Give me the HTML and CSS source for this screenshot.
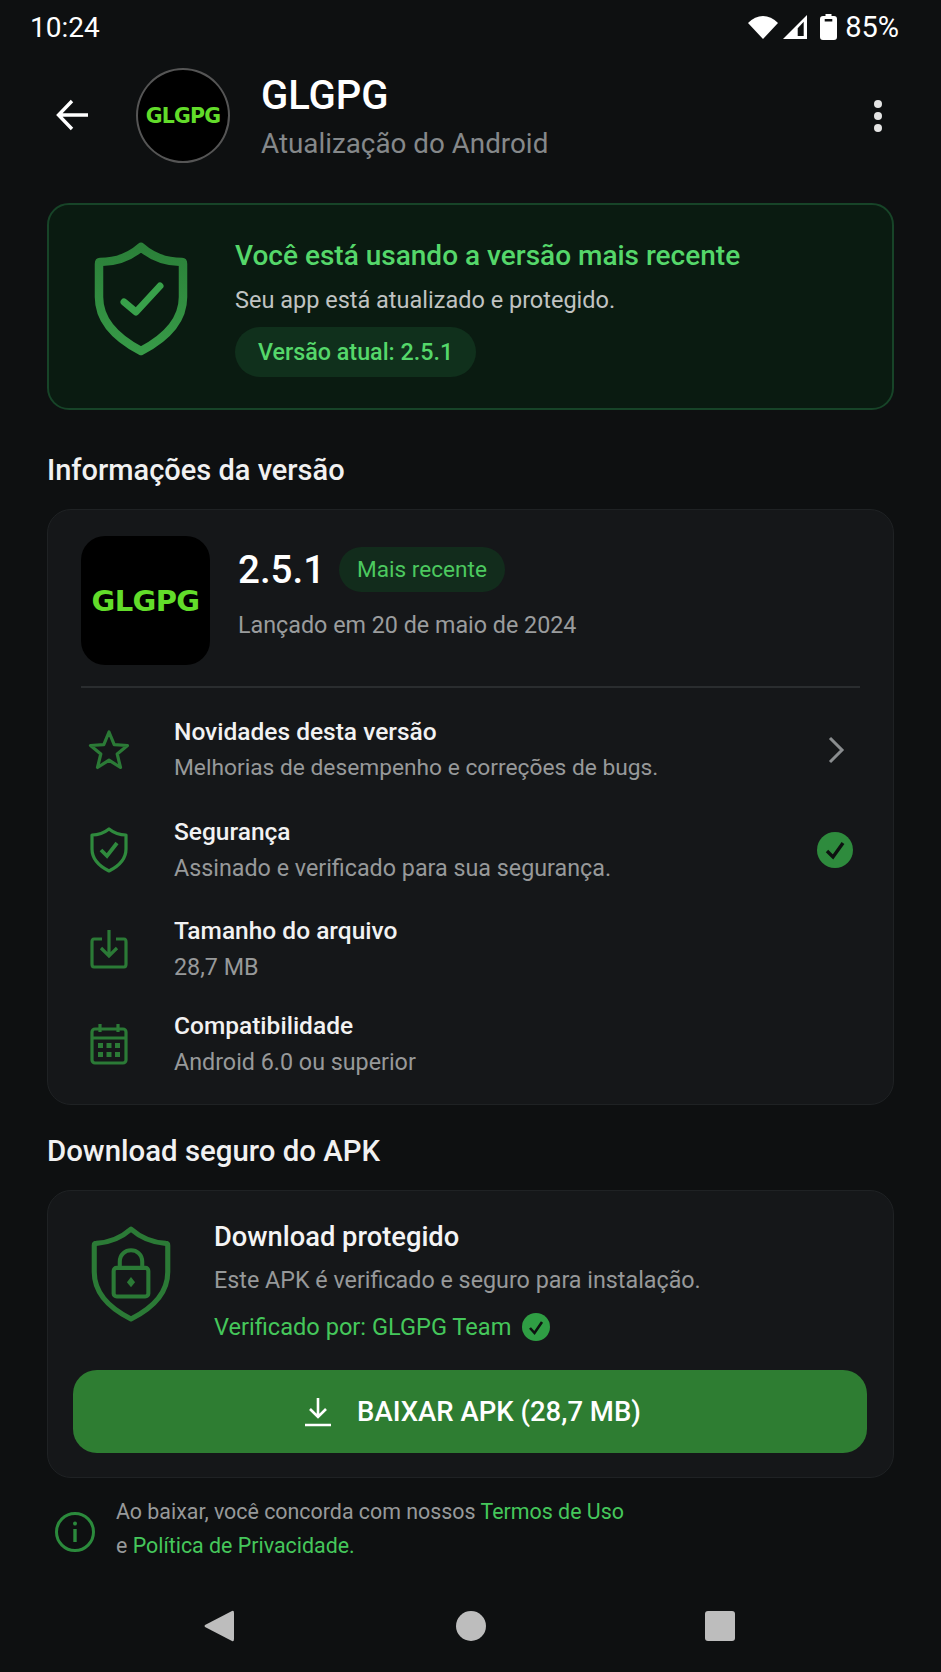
FILE: index.html
```html
<!DOCTYPE html>
<html lang="pt-BR">
<head>
<meta charset="utf-8">
<title>GLGPG</title>
<link rel="stylesheet" href="styles.css">
</head>
<body>
<div class="screen">
  <div class="status">
    <span class="time">10:24</span>
    <div class="status-right">
      <svg class="ic-wifi" width="30" height="23" viewBox="0 0 30 23"><path d="M15 23 0 7Q7 0 15 0T30 7Z" fill="#fff"/></svg>
      <svg class="ic-signal" width="24" height="24" viewBox="0 0 24 24"><path d="M24 0V24H0ZM14.700 13.300 20.700 6.700V21H14.700Z" fill="#fff" fill-rule="evenodd"/></svg>
      <svg class="ic-batt" width="17" height="26" viewBox="0 0 17 26"><path d="M5.500 0H11.500V2H14Q17 2 17 5V23Q17 26 14 26H3Q0 26 0 23V5Q0 2 3 2H5.500ZM4.700 5V7.500H12.300V5Z" fill="#fff" fill-rule="evenodd"/></svg>
      <span class="batt-text">85%</span>
    </div>
  </div>

  <header class="header">
    <svg class="back" width="34" height="32" viewBox="0 0 34 32"><path d="M32 16H3M16 2 2.500 16 16 30" fill="none" stroke="#fff" stroke-width="3.400"/></svg>
    <div class="avatar"><span>GLGPG</span></div>
    <div class="header-text">
      <div class="app-name">GLGPG</div>
      <div class="app-sub">Atualização do Android</div>
    </div>
    <div class="dots"><i></i><i></i><i></i></div>
  </header>

  <section class="hero">
    <svg class="hero-shield" width="94" height="114" viewBox="0 0 94 114">
      <defs><linearGradient id="g1" x1="0" y1="0" x2="0" y2="1"><stop offset="0" stop-color="#2b8039"/><stop offset="1" stop-color="#379a47"/></linearGradient></defs>
      <path d="M47 5C57 14 71 20 88 20Q89 20 89 22V55C89 80 70 97 47 109C24 97 5 80 5 55V22Q5 20 6 20C23 20 37 14 47 5Z" fill="none" stroke="url(#g1)" stroke-width="8.500" stroke-linejoin="round"/>
      <path d="M30 60 42 70 66 44" fill="none" stroke="#38a14a" stroke-width="7" stroke-linecap="round" stroke-linejoin="round"/>
    </svg>
    <div class="hero-text">
      <div class="hero-title">Você está usando a versão mais recente</div>
      <div class="hero-sub">Seu app está atualizado e protegido.</div>
      <div class="hero-pill">Versão atual: 2.5.1</div>
    </div>
  </section>

  <h2 class="section-title first">Informações da versão</h2>

  <section class="card info-card">
    <div class="ver-top">
      <div class="logo"><span>GLGPG</span></div>
      <div class="ver-text">
        <div class="ver-line"><span class="ver-num">2.5.1</span><span class="ver-badge">Mais recente</span></div>
        <div class="ver-date">Lançado em 20 de maio de 2024</div>
      </div>
    </div>
    <div class="divider"></div>
    <div class="rows">
      <div class="row row-a">
        <svg class="row-ic" width="42" height="42" viewBox="0 0 42 42"><path d="M21 3 26.200 15.600 39.500 16.500 29.200 25 32.500 38.500 21 31.200 9.500 38.500 12.800 25 2.500 16.500 15.800 15.600Z" fill="none" stroke="#2b7a36" stroke-width="3.200" stroke-linejoin="round"/></svg>
        <div class="row-text"><div class="row-title">Novidades desta versão</div><div class="row-sub">Melhorias de desempenho e correções de bugs.</div></div>
        <svg class="chev" width="20" height="28" viewBox="0 0 20 28"><path d="M4 2 16 14 4 26" fill="none" stroke="#8a8d8f" stroke-width="3"/></svg>
      </div>
      <div class="row row-b">
        <svg class="row-ic" width="42" height="46" viewBox="0 0 42 46"><path d="M21 2C26 6 32 8 38 8V22C38 32 31 39 21 44C11 39 4 32 4 22V8C10 8 16 6 21 2Z" fill="none" stroke="#2f8a3d" stroke-width="3.200" stroke-linejoin="round"/><path d="M13 23 19 29 29 16" fill="none" stroke="#2f8a3d" stroke-width="3.800"/></svg>
        <div class="row-text"><div class="row-title">Segurança</div><div class="row-sub">Assinado e verificado para sua segurança.</div></div>
        <svg class="tick" width="36" height="36" viewBox="0 0 36 36"><circle cx="18" cy="18" r="18" fill="#2e8b3d"/><path d="M10 19 16 25 26 11" fill="none" stroke="#0d1210" stroke-width="3.400"/></svg>
      </div>
      <div class="row row-c">
        <svg class="row-ic" width="42" height="40" viewBox="0 0 42 40"><path d="M14 10H6Q4 10 4 13V35Q4 38 6 38H36Q38 38 38 35V13Q38 10 36 10H28" fill="none" stroke="#2b7a36" stroke-width="3.200"/><path d="M21 1V27M13 19 21 27 29 19" fill="none" stroke="#2b7a36" stroke-width="3.200"/></svg>
        <div class="row-text"><div class="row-title">Tamanho do arquivo</div><div class="row-sub">28,7 MB</div></div>
      </div>
      <div class="row row-d">
        <svg class="row-ic" width="42" height="42" viewBox="0 0 42 42"><rect x="4" y="6" width="34" height="34" rx="3" fill="none" stroke="#2b7a36" stroke-width="3.200"/><path d="M4 15H38M12 1V9M30 1V9" fill="none" stroke="#2b7a36" stroke-width="3.200"/><g fill="#2b7a36"><rect x="10" y="20" width="5" height="5"/><rect x="18.500" y="20" width="5" height="5"/><rect x="27" y="20" width="5" height="5"/><rect x="10" y="29" width="5" height="5"/><rect x="18.500" y="29" width="5" height="5"/><rect x="27" y="29" width="5" height="5"/></g></svg>
        <div class="row-text"><div class="row-title">Compatibilidade</div><div class="row-sub">Android 6.0 ou superior</div></div>
      </div>
    </div>
  </section>

  <h2 class="section-title second">Download seguro do APK</h2>

  <section class="card dl-card">
    <div class="dl-top">
      <svg class="dl-shield" width="82" height="98" viewBox="0 0 80 96">
        <path d="M40 4C49 12 60 17 74 18Q76 18 76 20V46C76 68 60 82 40 92C20 82 4 68 4 46V20Q4 18 6 18C20 17 31 12 40 4Z" fill="none" stroke="#2b7a36" stroke-width="5" stroke-linejoin="round"/>
        <path d="M29 42V36C29 21 51 21 51 36V42" fill="none" stroke="#2b7a36" stroke-width="4"/>
        <rect x="23" y="42" width="34" height="28" rx="3" fill="none" stroke="#2b7a36" stroke-width="4"/>
        <path d="M40 51 44 56 40 61 36 56Z" fill="#2b7a36"/>
      </svg>
      <div class="dl-text">
        <div class="dl-title">Download protegido</div>
        <div class="dl-sub">Este APK é verificado e seguro para instalação.</div>
        <div class="dl-ver"><span>Verificado por: GLGPG Team</span><svg width="28" height="28" viewBox="0 0 28 28"><circle cx="14" cy="14" r="14" fill="#2f9e44"/><path d="M8 15 12.500 20 20 9" fill="none" stroke="#0d1210" stroke-width="2.600"/></svg></div>
      </div>
    </div>
    <button class="dl-btn">
      <svg width="26" height="30" viewBox="0 0 26 30"><path d="M13 1V20M5 12 13 20 21 12M0 28H26" fill="none" stroke="#fff" stroke-width="2.600"/></svg>
      <span>BAIXAR APK (28,7 MB)</span>
    </button>
  </section>

  <div class="legal">
    <svg class="legal-ic" width="40" height="40" viewBox="0 0 40 40"><circle cx="20" cy="20" r="18.500" fill="none" stroke="#2b8a3c" stroke-width="3"/><path d="M20 17V30" stroke="#2b8a3c" stroke-width="3.400"/><circle cx="20" cy="11.500" r="2" fill="#2b8a3c"/></svg>
    <p class="legal-text">Ao baixar, você concorda com nossos <a>Termos de Uso</a><br>e <a>Política de Privacidade.</a></p>
  </div>

  <nav class="nav">
    <svg width="30" height="32" viewBox="0 0 30 32"><path d="M28 1Q30 0 30 3V29Q30 32 28 31L1 17Q0 16 1 15Z" fill="#bdbdbd"/></svg>
    <div class="nav-home"></div>
    <div class="nav-recent"></div>
  </nav>
</div>
</body>
</html>
```
FILE: styles.css
```css
* { box-sizing: border-box; }
html, body { margin: 0; padding: 0; }
body {
  width: 941px;
  height: 1672px;
  overflow: hidden;
  background: #0e1011;
  font-family: Roboto, "Liberation Sans", sans-serif;
  color: #fff;
}
.screen { display: flex; flex-direction: column; height: 1672px; }

.status {
  height: 54px;
  padding: 0 42px 0 30px;
  display: flex;
  align-items: center;
  justify-content: space-between;
}
.time { font-size: 28px; }
.status-right { display: flex; align-items: center; font-size: 29px; }
.ic-signal { margin-left: 5px; }
.ic-batt { margin-left: 13px; }
.batt-text { margin-left: 8px; }

.header {
  height: 109px;
  padding: 14px 59px 0 56px;
  display: flex;
  align-items: flex-start;
}
.back { margin-top: 31px; flex: none; }
.avatar {
  width: 94px;
  height: 95px;
  margin-left: 46px;
  border-radius: 50%;
  background: #000;
  border: 2px solid #555;
  display: flex;
  align-items: center;
  justify-content: center;
  flex: none;
}
.avatar span, .logo span {
  font-family: "DejaVu Sans", sans-serif;
  font-weight: 700;
  color: #62dc2a;
}
.avatar span { font-size: 20.500px; letter-spacing: -0.8px; }
.header-text { margin-left: 31px; flex: 1; }
.app-name { font-size: 40px; font-weight: 500; line-height: 48px; margin-top: 4px; }
.app-sub { font-size: 27.800px; line-height: 34px; margin-top: 7px; color: #85888a; }
.dots { display: flex; flex-direction: column; gap: 4px; margin-top: 32px; }
.dots i { display: block; width: 8px; height: 8px; border-radius: 50%; background: #e4e4e4; }

.hero {
  margin: 40px 47px 0;
  height: 207px;
  border: 2px solid #174428;
  border-radius: 22px;
  background: #0a1b11;
  padding: 37px 0 0 45px;
  display: flex;
  align-items: flex-start;
}
.hero-shield { flex: none; }
.hero-text { margin-left: 47px; }
.hero-title { font-size: 28px; font-weight: 500; color: #55d76a; line-height: 34px; margin-top: -3px; }
.hero-sub { font-size: 23.500px; line-height: 28px; color: #c0c3c2; margin-top: 13px; }
.hero-pill {
  display: inline-block;
  margin-top: 13px;
  height: 50px;
  line-height: 50px;
  padding: 0 23px;
  border-radius: 25px;
  background: #10301c;
  color: #55d76a;
  font-size: 23.300px;
  font-weight: 500;
}

.section-title { margin: 0 0 0 47px; font-size: 29px; font-weight: 500; line-height: 34px; color: #f1f1f1; }
.section-title.first { margin-top: 43px; }
.section-title.second { margin-top: 29px; font-size: 29.400px; }

.card {
  margin: 0 47px;
  background: #151719;
  border: 1.500px solid #1f2224;
  border-radius: 24px;
}
.info-card { margin-top: 22px; height: 596px; padding: 26px 33px 0; }
.ver-top { display: flex; height: 150px; }
.logo {
  width: 129px;
  height: 129px;
  border-radius: 24px;
  background: #000;
  display: flex;
  align-items: center;
  justify-content: center;
  flex: none;
}
.logo span { font-size: 29px; letter-spacing: -0.6px; }
.ver-text { margin-left: 28px; }
.ver-line { display: flex; align-items: center; gap: 14px; height: 46px; margin-top: 10px; }
.ver-num { font-size: 38.500px; font-weight: 500; }
.ver-badge {
  height: 45px;
  line-height: 45px;
  padding: 0 18px;
  border-radius: 23px;
  background: #122c1c;
  color: #4cc95f;
  font-size: 22.600px;
}
.ver-date { font-size: 23.300px; line-height: 28px; color: #9a9c9d; margin-top: 19px; }
.divider { height: 2px; background: #2a2d2f; }

.rows { display: flex; flex-direction: column; }
.row { display: flex; align-items: center; }
.row-a { margin-top: 26px; height: 72px; }
.row-b { margin-top: 28px; height: 72px; }
.row-c { margin-top: 27px; height: 72px; }
.row-d { margin-top: 23px; height: 72px; }
.row-ic { flex: none; margin-left: 7px; }
.row-text { margin-left: 44px; flex: 1; }
.row-title { font-size: 24.500px; font-weight: 500; line-height: 30px; color: #f2f2f2; }
.row-sub { font-size: 23.300px; line-height: 30px; margin-top: 6px; color: #97999a; }
.row-a .row-sub { font-size: 22.750px; }
.chev { margin-right: 14px; flex: none; }
.tick { margin-right: 7px; flex: none; }

.dl-card { margin-top: 22px; height: 288px; padding: 0 25px; }
.dl-top { display: flex; height: 179px; align-items: flex-start; padding-top: 34px; }
.dl-shield { flex: none; margin-left: 17px; }
.dl-text { margin-left: 42px; margin-top: -4px; }
.dl-title { font-size: 27.300px; font-weight: 500; line-height: 32px; color: #f4f4f4; }
.dl-sub { font-size: 23.300px; line-height: 28px; margin-top: 13px; color: #97999a; }
.dl-ver { display: flex; align-items: center; gap: 11px; margin-top: 17px; height: 32px; font-size: 23.600px; color: #45c75b; }
.dl-btn {
  display: flex;
  align-items: center;
  justify-content: center;
  gap: 26px;
  width: 794px;
  height: 83px;
  padding: 0 0 0 6px;
  border: 0;
  border-radius: 24px;
  background: #2e7d32;
  color: #fff;
  font-family: inherit;
  font-size: 27.500px;
  font-weight: 500;
}

.legal { display: flex; align-items: flex-start; margin: 17px 0 0 55px; }
.legal-ic { flex: none; margin-top: 17px; }
.legal-text { margin: 0 0 0 21px; font-size: 21.400px; line-height: 33.500px; color: #97999a; }
.legal-text a { color: #45c75b; }

.nav {
  margin-top: 48px;
  padding-left: 204px;
  display: flex;
  align-items: center;
}
.nav-home { width: 30px; height: 30px; border-radius: 50%; background: #bdbdbd; margin-left: 222px; }
.nav-recent { width: 30px; height: 30px; border-radius: 3px; background: #bdbdbd; margin-left: 219px; }
```
